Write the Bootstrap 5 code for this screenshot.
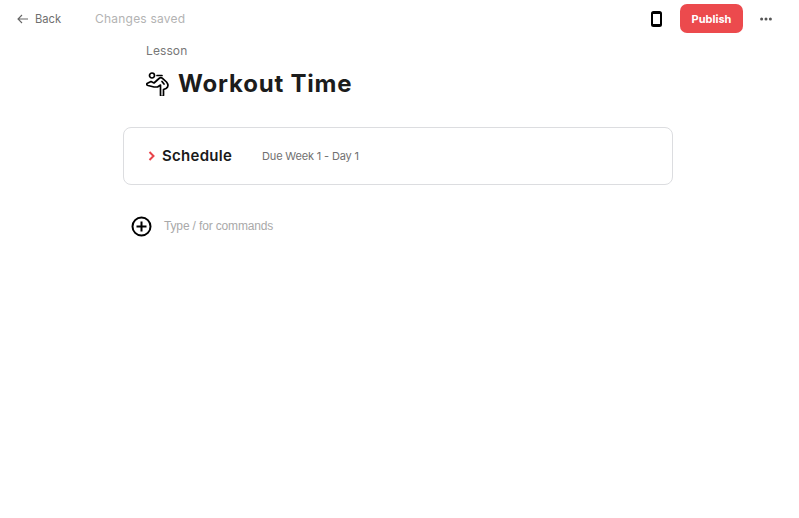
<!DOCTYPE html>
<html lang="en">
<head>
<meta charset="utf-8">
<title>Workout Time</title>
<link href="https://cdn.jsdelivr.net/npm/bootstrap@5.3.0/dist/css/bootstrap.min.css" rel="stylesheet">
<style>
body { font-family: Inter, "Noto Sans", sans-serif; background: #fff; color: #1c1c1c; }
.topbar { height: 37px; padding: 0 27px 0 17px; }
.backlink { font-size: 11.2px; color: #6f6f6f; text-decoration: none; width: 78px; gap: 7px; padding-top: 2px; }
.backlink svg { margin-top: -1px; }
.savedtxt { font-size: 12px; color: #b3b3b3; letter-spacing: .22px; padding-top: 1px; }
.pubbtn { background: #ec4a4d; color: #fff; font-size: 11px; font-weight: 700; width: 63px; height: 29px; padding: 1px 0 0; border: 0; border-radius: 7px; margin: 0 17px 0 18px; }
.pubbtn:hover { background: #ec4a4d; color: #fff; }
.docwrap { width: 550px; margin-left: 123px; }
.kindtxt { font-size: 12px; color: #777; margin: 6px 0 0 23px; line-height: 15px; letter-spacing: .1px; }
.doctitle { font-size: 24px; font-weight: 700; line-height: 30px; margin: 11px 0 0 23px; gap: 8px; color: #1c1c1c; letter-spacing: .8px; }
.schedcard { height: 58px; margin-top: 28px; border: 1px solid #dcdde0; border-radius: 8px; padding-left: 24px; }
.schedname { font-size: 15px; font-weight: 600; color: #1a1a1a; margin-left: 7px; width: 100px; letter-spacing: .28px; }
.schedue { font-size: 11px; color: #707070; letter-spacing: -.15px; }
.cmdrow { margin-top: 31px; margin-left: 8px; gap: 12px; }
.cmdtxt { font-family: "Liberation Sans", Arial, sans-serif; font-size: 12px; letter-spacing: -.15px; color: #a9a9a9; margin-bottom: 2px; }
</style>
</head>
<body>
<div class="topbar d-flex align-items-center">
  <a href="#" class="backlink d-flex align-items-center">
    <svg width="11" height="10" viewBox="0 0 11 10" fill="none" stroke="#666" stroke-width="1.1"><path d="M11 5H1M5 1 1 5l4 4"/></svg>
    Back
  </a>
  <span class="savedtxt">Changes saved</span>
  <svg class="ms-auto" width="11" height="16" viewBox="0 0 11 16"><rect x="1" y="1" width="9" height="14" rx="1.5" fill="none" stroke="#000" stroke-width="2"/><rect x="1" y="1" width="9" height="2" fill="#000"/><rect x="1" y="13" width="9" height="2" fill="#000"/></svg>
  <button class="btn pubbtn">Publish</button>
  <svg width="12" height="4" viewBox="0 0 12 4" fill="#555"><circle cx="1.6" cy="2" r="1.5"/><circle cx="6" cy="2" r="1.5"/><circle cx="10.4" cy="2" r="1.5"/></svg>
</div>
<div class="docwrap">
  <div class="kindtxt">Lesson</div>
  <h1 class="doctitle d-flex align-items-center">
    <svg width="24" height="24" viewBox="0 0 24 24" fill="none" stroke="#000" stroke-width="1.700" stroke-linejoin="round" stroke-linecap="round"><circle cx="6" cy="3.500" r="2.500"/><path d="M11 3.500h5"/><path d="M1 11.500 5 9.500l3 1.500 5-4.500c1-.8 2.500-1 3.500-.2l4 3.700c2 2.500 2 5-.5 6.500l-2.500 1v5.500c0 1-.7 1.500-1.500 1.500s-1.500-.5-1.500-1.500V13l-3 2H8l-6-1.500c-1.500-.5-1.500-1.500-1-2z"/><path d="M16 9.500l2 2.500"/></svg>
    Workout Time
  </h1>
  <div class="schedcard d-flex align-items-center">
    <svg width="7" height="10" viewBox="0 0 7 10" fill="none" stroke="#e8434a" stroke-width="2"><path d="M1.500 1l4 4-4 4"/></svg>
    <span class="schedname">Schedule</span>
    <span class="schedue">Due Week 1 - Day 1</span>
  </div>
  <div class="cmdrow d-flex align-items-center">
    <svg width="21" height="21" viewBox="0 0 21 21" fill="none" stroke="#000" stroke-width="2"><circle cx="10.500" cy="10.500" r="9"/><path d="M10.500 5.500v10M5.500 10.500h10"/></svg>
    <span class="cmdtxt">Type / for commands</span>
  </div>
</div>
<script src="https://cdn.jsdelivr.net/npm/bootstrap@5.3.0/dist/js/bootstrap.bundle.min.js"></script>
</body>
</html>
